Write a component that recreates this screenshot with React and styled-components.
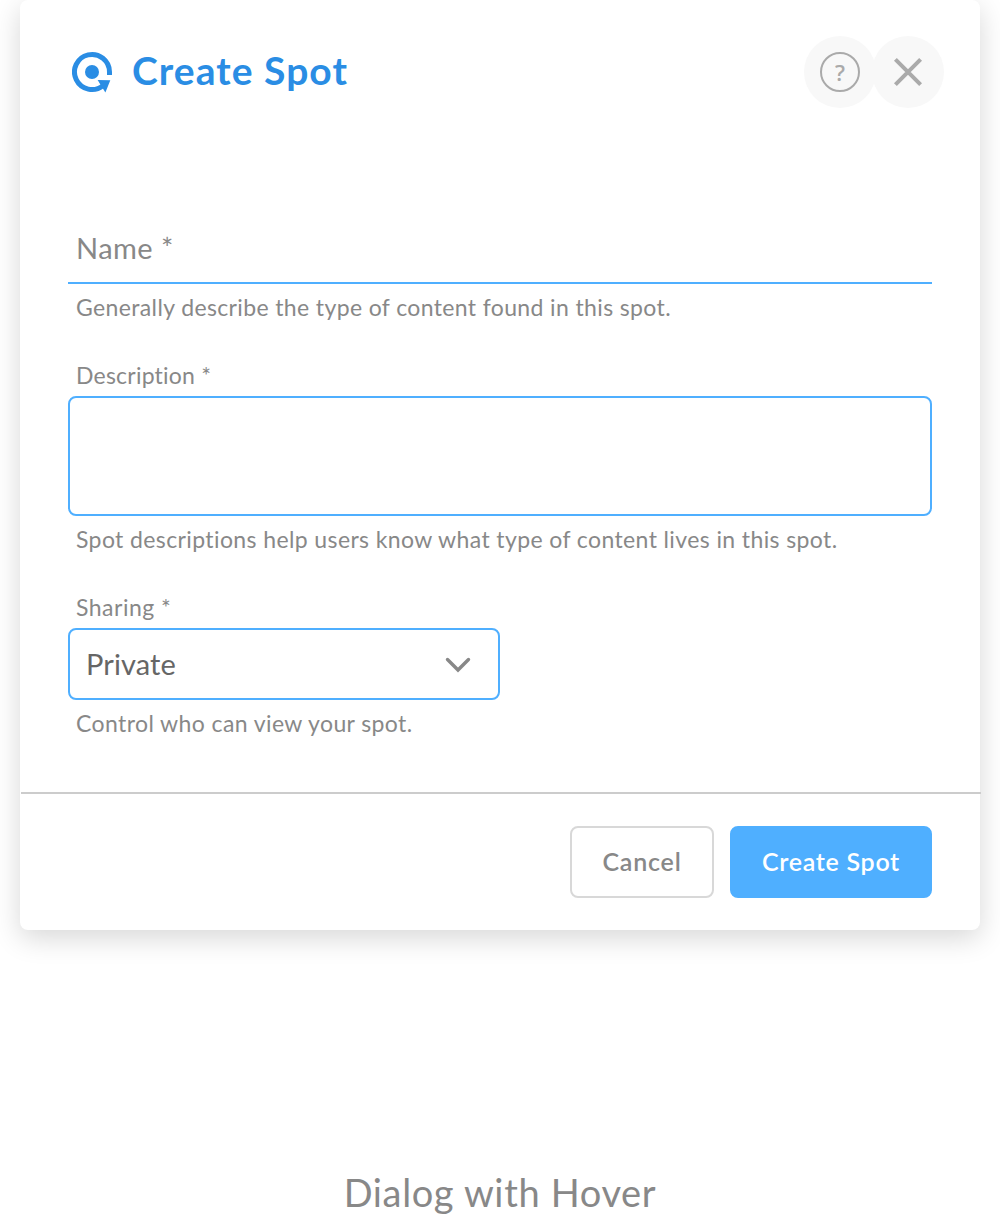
import React from "react";
import styled, { createGlobalStyle } from "styled-components";

const GlobalStyle = createGlobalStyle`
  * { box-sizing: border-box; }
  body {
    margin: 0;
    background: #fff;
    color: #888;
    font-family: Lato, "Open Sans", sans-serif;
    font-variant-ligatures: none;
  }
`;

const Page = styled.main`
  width: 1000px;
  height: 1218px;
  overflow: hidden;
  display: flex;
  flex-direction: column;
  align-items: center;
`;

const Dialog = styled.section`
  width: 960px;
  height: 930px;
  flex: none;
  display: flex;
  flex-direction: column;
  background: #fff;
  border-radius: 8px;
  box-shadow: 0 8px 28px rgba(0, 0, 0, 0.16);
`;

const Header = styled.header`
  height: 144px;
  padding: 0 36px 0 52px;
  display: flex;
  align-items: center;
`;

const Title = styled.h1`
  flex: 1;
  margin: 0 0 5px 19px;
  font-size: 39px;
  line-height: 44px;
  font-weight: 700;
  color: #2a8de4;
`;

const RoundButton = styled.button`
  width: 72px;
  height: 72px;
  margin: 0 0 0 -4px;
  padding: 0;
  display: grid;
  place-items: center;
  border: 0;
  border-radius: 50%;
  background: #f8f8f8;
`;

const HelpMark = styled.span`
  width: 40px;
  height: 40px;
  display: grid;
  place-items: center;
  border: 2px solid #aaa;
  border-radius: 50%;
  font-family: "Open Sans", "Noto Sans", sans-serif;
  font-size: 22px;
  font-weight: 600;
  line-height: 36px;
  color: #aaa;
`;

const Form = styled.form`
  flex: 1;
  padding: 66px 48px 0;
  display: flex;
  flex-direction: column;
  gap: 44px;
`;

const Field = styled.div`
  display: flex;
  flex-direction: column;
`;

const Label = styled.label`
  margin: 0 8px 10px;
  font-size: 23px;
  line-height: 22px;
`;

const Helper = styled.p`
  margin: 12px 8px 2px;
  font-size: 23px;
  line-height: 22px;
`;

const UnderlinedInput = styled.div`
  height: 74px;
  padding: 18px 8px 0;
  border-bottom: 2px solid #4fafff;
  font-size: 29px;
  line-height: 40px;
`;

const TextArea = styled.div`
  height: 120px;
  border: 2px solid #4fafff;
  border-radius: 8px;
`;

const Select = styled.div`
  width: 432px;
  height: 72px;
  padding: 0 28px 0 16px;
  display: flex;
  align-items: center;
  justify-content: space-between;
  border: 2px solid #4fafff;
  border-radius: 8px;
  font-size: 29px;
  line-height: 40px;
  color: #666;
`;

const Chevron = styled.svg`
  width: 24px;
  height: 14px;
  margin-top: 2px;
  overflow: visible;
`;

const Footer = styled.footer`
  width: 960px;
  height: 138px;
  margin-left: 1px;
  padding: 32px 49px 0 0;
  display: flex;
  justify-content: flex-end;
  gap: 16px;
  border-top: 2px solid #ccc;
`;

const Button = styled.button`
  width: ${(p) => p.$width}px;
  height: 72px;
  padding: 0 0 2px;
  border: 2px solid ${(p) => (p.$primary ? "#4fafff" : "#d8d8d8")};
  border-radius: 8px;
  background: ${(p) => (p.$primary ? "#4fafff" : "#fff")};
  color: ${(p) => (p.$primary ? "#fff" : "#888")};
  font-family: inherit;
  font-size: 25px;
  font-weight: 600;
  line-height: 30px;
`;

const Caption = styled.h2`
  margin: 238px 0 0;
  font-size: 38px;
  line-height: 48px;
  font-weight: 400;
`;

const Run = styled.span`
  letter-spacing: ${(p) => p.$track || 0}px;
  white-space: nowrap;
`;

function SpotIcon() {
  return (
    <svg width="41" height="42" viewBox="0 0 41 42" fill="none">
      <path d="M37.5 24 V21 A17.5 17.5 0 1 0 31 34.6" stroke="#2a8de4" strokeWidth="5" />
      <circle cx="20" cy="21" r="7" fill="#2a8de4" />
      <path d="M25.6 29 L38.3 29.2 L33.4 41.5 Z" fill="#2a8de4" />
    </svg>
  );
}

export default function App() {
  return (
    <>
      <GlobalStyle />
      <Page>
        <Dialog>
          <Header>
            <SpotIcon />
            <Title><Run $track={1.05}>Create Spot</Run></Title>
            <RoundButton aria-label="Help"><HelpMark>?</HelpMark></RoundButton>
            <RoundButton aria-label="Close">
              <svg width="30" height="30" viewBox="0 0 30 30" stroke="#aaa" strokeWidth="4">
                <path d="M2.4 2.4 L27.6 27.6 M27.6 2.4 L2.4 27.6" />
              </svg>
            </RoundButton>
          </Header>
          <Form>
            <Field>
              <UnderlinedInput><Run $track={0.45}>Name *</Run></UnderlinedInput>
              <Helper><Run $track={0.37}>Generally describe the type of content found in this spot.</Run></Helper>
            </Field>
            <Field>
              <Label><Run $track={0.22}>Description *</Run></Label>
              <TextArea />
              <Helper><Run $track={0.39}>Spot descriptions help users know what type of content lives in this spot.</Run></Helper>
            </Field>
            <Field>
              <Label><Run $track={0.5}>Sharing *</Run></Label>
              <Select>
                <Run $track={0.12}>Private</Run>
                <Chevron viewBox="0 0 24 14" fill="none" stroke="#888" strokeWidth="3.4" strokeLinecap="round">
                  <path d="M1.5 1.5 L12 12 L22.5 1.5" />
                </Chevron>
              </Select>
              <Helper><Run $track={0.4}>Control who can view your spot.</Run></Helper>
            </Field>
          </Form>
          <Footer>
            <Button $width={144}><Run $track={0.8}>Cancel</Run></Button>
            <Button $width={202} $primary><Run $track={0.7}>Create Spot</Run></Button>
          </Footer>
        </Dialog>
        <Caption><Run $track={0.65}>Dialog with Hover</Run></Caption>
      </Page>
    </>
  );
}
